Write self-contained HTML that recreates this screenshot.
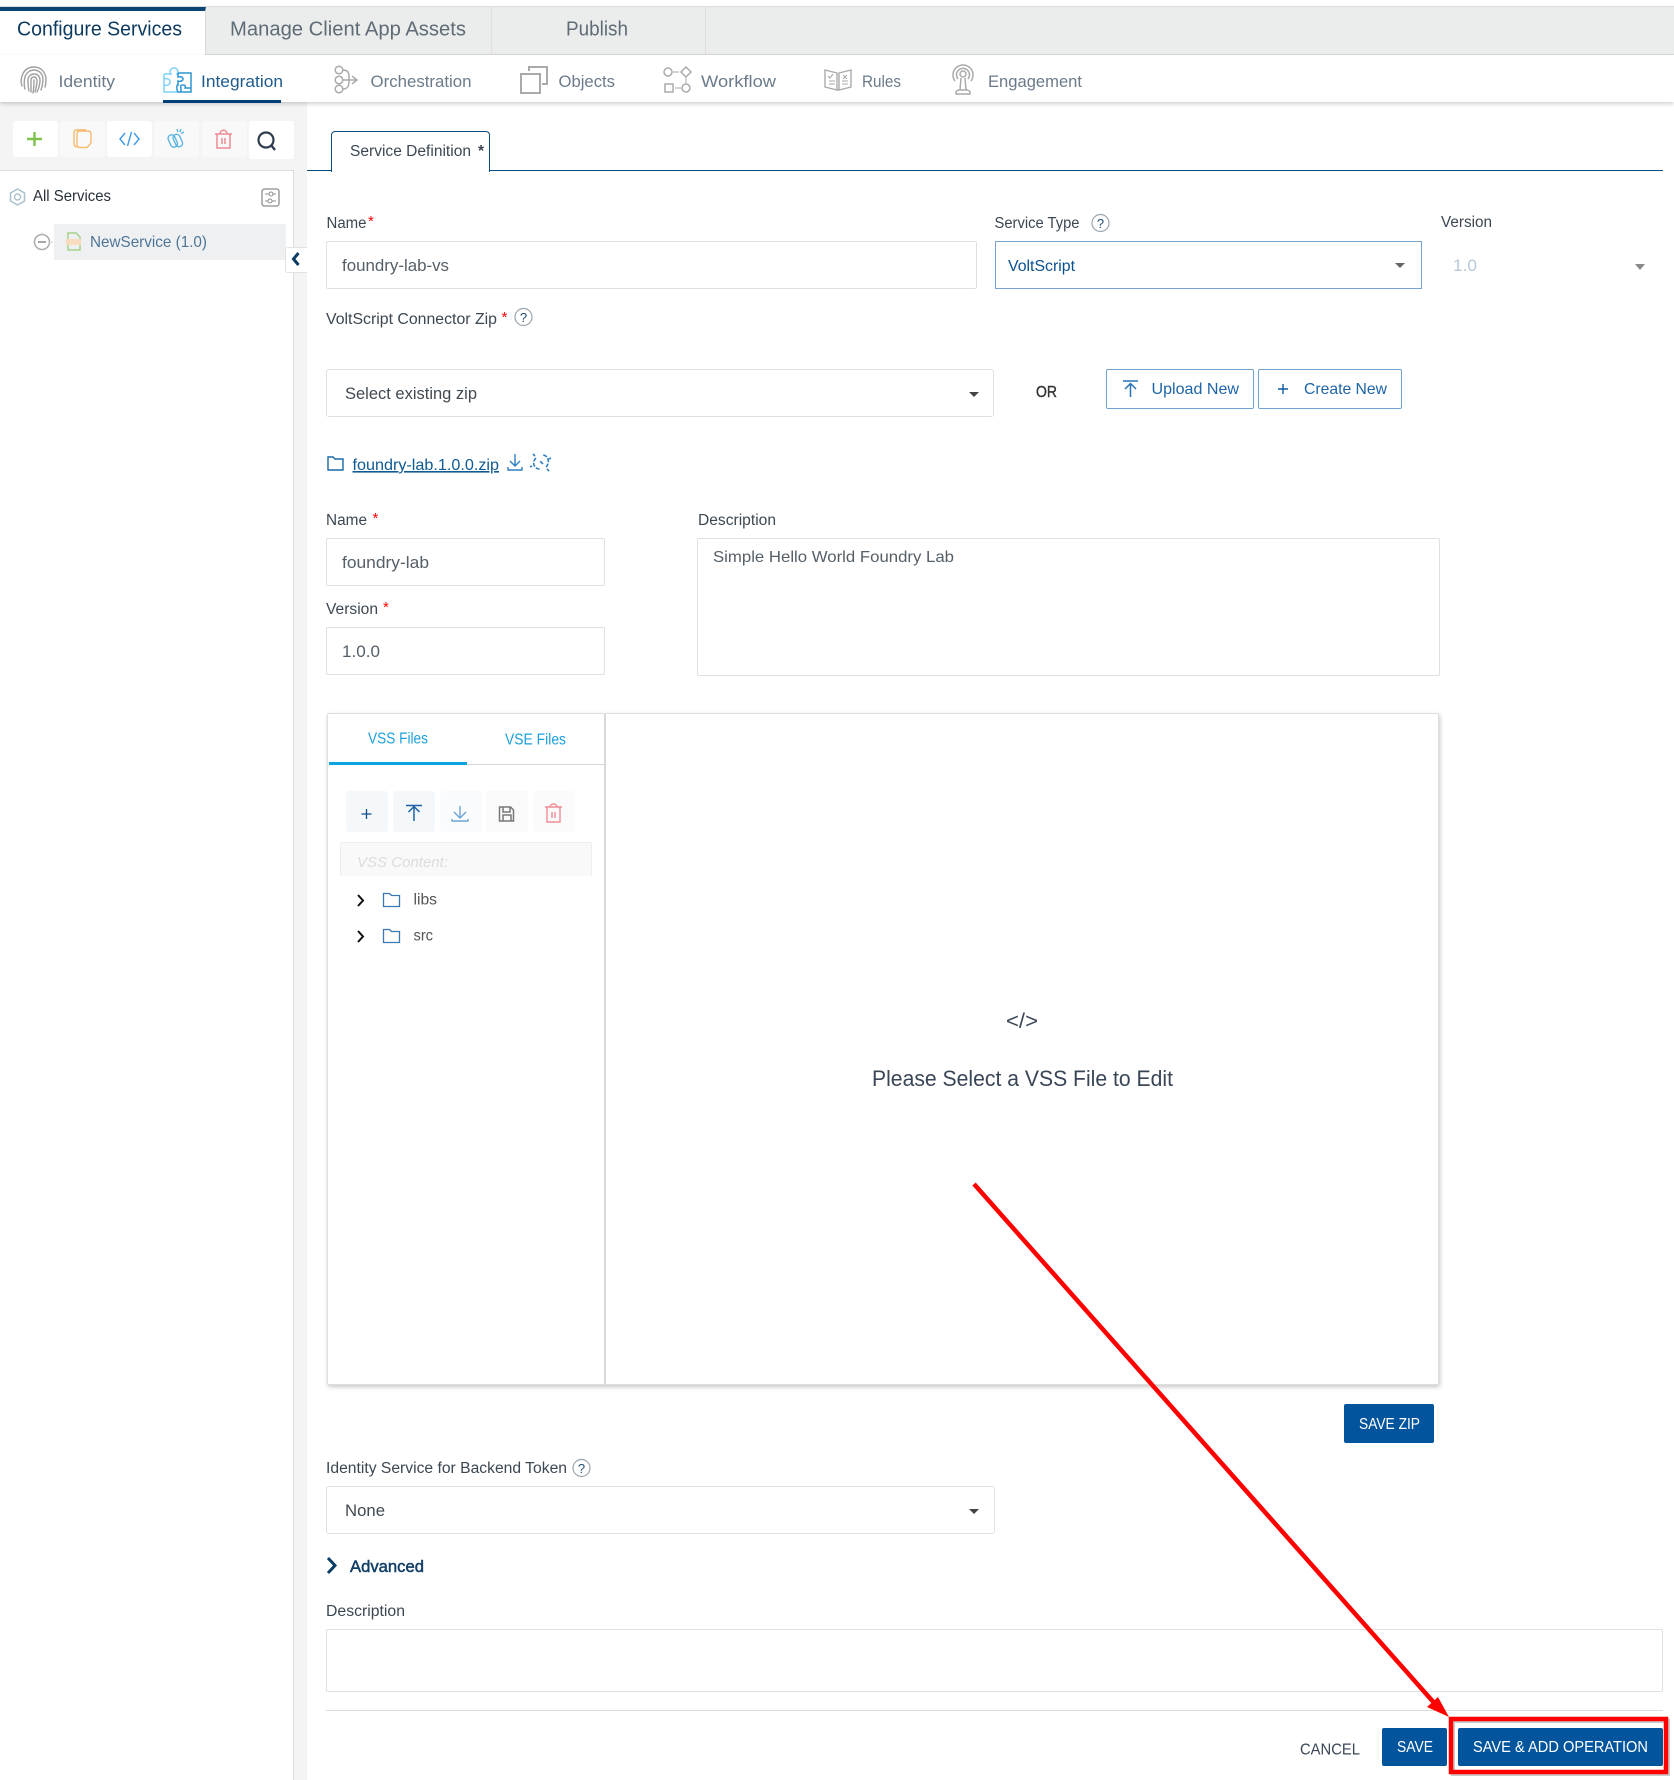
<!DOCTYPE html>
<html lang="en"><head><meta charset="utf-8"><title>Configure Services</title>
<style>
html,body{margin:0;padding:0;background:#fff}
#p{position:relative;width:1674px;height:1780px;overflow:hidden;background:#fff;font-family:"Liberation Sans",sans-serif}
.b{position:absolute;box-sizing:border-box}
.i{border:1px solid #e0e0e0;border-radius:2px;background:#fff}
.btn{background:#02549c;border-radius:2px}
.o{border:1px solid #72a2d0;border-radius:2px;background:#fff}
svg{position:absolute;left:0;top:0}
text{font-family:"Liberation Sans",sans-serif}
</style></head><body><div id="p">
<div class="b" style="left:0;top:6px;width:1674px;height:49px;background:#ebeded;border-top:1px solid #dcdcdc;border-bottom:1px solid #d8d8d8"></div>
<div class="b" style="left:0;top:7px;width:206px;height:49px;background:#fff;border-right:1px solid #d8d8d8;border-top:4px solid #0a4576"></div>
<div class="b" style="left:491px;top:7px;width:1px;height:47px;background:#dfdfdf"></div>
<div class="b" style="left:705px;top:7px;width:1px;height:47px;background:#dfdfdf"></div>
<div class="b" style="left:307px;top:102px;width:1367px;height:1678px;background:#fff"></div>
<div class="b" style="left:0;top:102px;width:307px;height:1678px;background:#f4f4f4"></div>
<div class="b" style="left:0;top:55px;width:1674px;height:47px;background:#fff;box-shadow:0 2px 4px rgba(0,0,0,.18)"></div>
<div class="b" style="left:163px;top:100px;width:118px;height:3px;background:#003e78"></div>
<div class="b" style="left:0;top:170px;width:294px;height:1610px;background:#fff;border-top:1px solid #dcdcdc;border-right:1px solid #dcdcdc"></div>
<div class="b" style="left:13px;top:121px;width:45px;height:36px;background:#fff;border-radius:3px"></div>
<div class="b" style="left:60px;top:121px;width:45px;height:36px;background:#f9f9f9;border-radius:3px"></div>
<div class="b" style="left:107px;top:121px;width:45px;height:36px;background:#fff;border-radius:3px"></div>
<div class="b" style="left:154px;top:121px;width:45px;height:36px;background:#f9f9f9;border-radius:3px"></div>
<div class="b" style="left:202px;top:121px;width:45px;height:36px;background:#f9f9f9;border-radius:3px"></div>
<div class="b" style="left:249px;top:121px;width:45px;height:38px;background:#fff;border-radius:3px"></div>
<div class="b" style="left:54px;top:224px;width:232px;height:36px;background:#eff0f2"></div>
<div class="b" style="left:285px;top:247px;width:22px;height:26px;background:#fff;border:1px solid #e2e2e2;border-right:0;border-radius:3px 0 0 3px"></div>
<div class="b" style="left:307px;top:170px;width:1356px;height:1px;background:#0a4c80"></div>
<div class="b" style="left:331px;top:131px;width:159px;height:41px;background:#fff;border:1.5px solid #0a4c80;border-bottom:0;border-radius:4px 4px 0 0"></div>
<div class="b i" style="left:326px;top:241px;width:651px;height:48px"></div>
<div class="b" style="left:995px;top:241px;width:427px;height:48px;border:1px solid #76a4cf;background:#fff"></div>
<div class="b i" style="left:326px;top:369px;width:668px;height:48px;border-radius:3px"></div>
<div class="b o" style="left:1106px;top:369px;width:148px;height:40px"></div>
<div class="b o" style="left:1258px;top:369px;width:144px;height:40px"></div>
<div class="b i" style="left:326px;top:538px;width:279px;height:48px"></div>
<div class="b i" style="left:326px;top:627px;width:279px;height:48px"></div>
<div class="b i" style="left:697px;top:538px;width:743px;height:138px"></div>
<div class="b" style="left:327px;top:713px;width:1112px;height:672px;background:#fff;border:1px solid #dedede;border-radius:2px;box-shadow:1px 2px 5px rgba(0,0,0,.22)"></div>
<div class="b" style="left:604px;top:714px;width:2px;height:670px;background:#d8d8d8"></div>
<div class="b" style="left:329px;top:764px;width:275px;height:1px;background:#d8d8d8"></div>
<div class="b" style="left:329px;top:762px;width:138px;height:3px;background:#0aa5e0"></div>
<div class="b" style="left:346px;top:791px;width:42px;height:41px;background:#f5f8fb;border-radius:3px"></div>
<div class="b" style="left:393px;top:791px;width:42px;height:41px;background:#f5f8fb;border-radius:3px"></div>
<div class="b" style="left:440px;top:791px;width:42px;height:41px;background:#fafbfd;border-radius:3px"></div>
<div class="b" style="left:486px;top:791px;width:42px;height:41px;background:#fafafb;border-radius:3px"></div>
<div class="b" style="left:533px;top:791px;width:42px;height:41px;background:#fbfbfb;border-radius:3px"></div>
<div class="b" style="left:340px;top:842px;width:252px;height:34px;background:#f9f9f9;border:1px solid #eee;border-bottom:0;border-radius:2px 2px 0 0"></div>
<div class="b btn" style="left:1344px;top:1404px;width:90px;height:39px"></div>
<div class="b i" style="left:326px;top:1486px;width:669px;height:48px;border-radius:3px"></div>
<div class="b i" style="left:326px;top:1629px;width:1337px;height:63px"></div>
<div class="b" style="left:326px;top:1710px;width:1337px;height:1px;background:#dcdcdc"></div>
<div class="b btn" style="left:1382px;top:1728px;width:65px;height:38px"></div>
<div class="b btn" style="left:1458px;top:1728px;width:205px;height:38px"></div>

<svg width="1674" height="1780" viewBox="0 0 1674 1780" xmlns="http://www.w3.org/2000/svg">
<g font-size="20">
<text x="17" y="35.500" textLength="165" lengthAdjust="spacingAndGlyphs" fill="#0d3a5f">Configure Services</text>
<text x="230" y="35.500" textLength="236" lengthAdjust="spacingAndGlyphs" fill="#5f6b75">Manage Client App Assets</text>
<text x="566" y="35.500" textLength="62" lengthAdjust="spacingAndGlyphs" fill="#5f6b75">Publish</text>
</g>
<g font-size="17" fill="#6c7b8a">
<text x="58.500" y="87" textLength="56.500" lengthAdjust="spacingAndGlyphs">Identity</text>
<text x="201" y="87" textLength="82" lengthAdjust="spacingAndGlyphs" fill="#1f5b8c">Integration</text>
<text x="370.500" y="87" textLength="101" lengthAdjust="spacingAndGlyphs">Orchestration</text>
<text x="558.500" y="87" textLength="56.500" lengthAdjust="spacingAndGlyphs">Objects</text>
<text x="701" y="87" textLength="75" lengthAdjust="spacingAndGlyphs">Workflow</text>
<text x="862" y="87" textLength="39" lengthAdjust="spacingAndGlyphs">Rules</text>
<text x="988" y="87" textLength="94" lengthAdjust="spacingAndGlyphs">Engagement</text>
</g>
<!-- subnav icons -->
<g fill="none" stroke="#a0a0a0" stroke-width="1.400" stroke-linecap="round">
<path d="M22 86c-1-3-1-7 0-10 2-6 6-9 12-9 6 0 11 4 12 11 0 3 0 6-1 9"/>
<path d="M25 89c-1-3-1-9 0-12 1-4 5-7 9-7 5 0 9 4 9 9 0 4-1 8-2 11"/>
<path d="M29 91c-1-4-1-8-1-11 0-4 3-6 6-6 4 0 6 3 6 6 0 4-1 8-3 12"/>
<path d="M31 92c0-4 0-9 0-12 0-2 1-3 3-3 2 0 3 2 3 4 0 4-1 7-2 11"/>
<path d="M34 80c0 4 0 8-1 13"/>
</g>
<path d="M164 74h7c-2-3 0-6 3-6 3 0 5 3 3 6h1M164 74v18h14M164 79c3-1 6 0 6 3s-3 4-6 3" fill="none" stroke="#7fd2f6" stroke-width="1.500"/>
<path d="M178 73h13v19h-13M178 73v4c2-1 5 0 5 2s-3 3-5 2v4c-2-1-1 7 0 7M191 88h-6c1-2 0-3-2-3s-3 1-2 3v4" fill="none" stroke="#2f95d2" stroke-width="1.500"/>
<g fill="none" stroke="#aaa" stroke-width="1.500">
<circle cx="339" cy="70" r="3.800"/><circle cx="339" cy="80" r="3.800"/><circle cx="339" cy="89" r="3.800"/>
<path d="M343 70c5 0 6 3 6 6v6c0 4-2 7-6 7M343 80h13M352 76l5 4-5 4"/>
</g>
<g fill="none" stroke="#aaa" stroke-width="2">
<path d="M529 71v-4h18v17h-5"/><rect x="521" y="74" width="19" height="19"/>
</g>
<g fill="none" stroke="#aaa" stroke-width="1.500">
<circle cx="668" cy="72" r="4"/><path d="M686 67l5 5-5 5-5-5z"/><circle cx="686" cy="88" r="4"/><rect x="665" y="84" width="8" height="8"/>
<path d="M673 72h6M686 77v6M681 88h-6" stroke-width="1"/>
</g>
<g fill="none" stroke="#aaa" stroke-width="1.400">
<path d="M825 70l12 3v17l-12-3zM851 70l-12 3v17l12-3zM837 90h2"/>
<path d="M828 76l2 2 3-4M829 81h6M829 84h6M843 75l4 4M847 75l-4 4M842 81h6M842 84h6" stroke-width="1.100"/>
</g>
<g fill="none" stroke="#aaa" stroke-width="1.500">
<circle cx="963" cy="74" r="3"/><path d="M958 79a6.500 6.500 0 1 1 10 0M955 81a10 10 0 1 1 16 0"/>
<path d="M961 78l-1 12h6l-1-12M956 94v-2c0-1 2-2 4-2h6c2 0 4 1 4 2v2z"/>
</g>
<!-- sidebar toolbar -->
<path d="M34.500 132v14M27 139h15" stroke="#7dc24b" stroke-width="2.400" fill="none"/>
<path d="M86 129.800h-9c-2 0-3 1-3 3v11c0 2 1 3 3 3M80 131h8c2 0 3 1 3 3v9l-4 4.500h-7c-2 0-3-1-3-3v-10.500c0-2 1-3 3-3z" fill="none" stroke="#f7bb70" stroke-width="1.400"/>
<path d="M125 133l-5 6 5 6M134 133l5 6-5 6M131.500 132l-4 14" fill="none" stroke="#3c9be8" stroke-width="1.400"/>
<g fill="none" stroke="#5bb5e0" stroke-width="1.400">
<rect x="-3.500" y="-6.500" width="7" height="13" rx="3.500" transform="translate(172.800 141) rotate(-25)"/>
<rect x="-3.500" y="-6.500" width="7" height="13" rx="3.500" transform="translate(177.800 140.500) rotate(-25)"/>
<path d="M177 129l1 3M181 129l-1 3M184 132l-3 1.500"/>
</g>
<path d="M215 134h17M220 134c0-5 7-5 7 0M217 134v14h13v-14M222 138v6M225 138v6" fill="none" stroke="#ee8a92" stroke-width="1.500"/>
<circle cx="266" cy="140" r="7.500" fill="none" stroke="#2e3e4e" stroke-width="2.200"/><path d="M271 145l4 5" stroke="#2e3e4e" stroke-width="2.400"/>
<!-- tree -->
<path d="M17.500 189l7 4v8l-7 4-7-4v-8z" fill="none" stroke="#a9c1cd" stroke-width="1.500"/><circle cx="17.500" cy="197" r="3" fill="none" stroke="#a9c1cd" stroke-width="1.400"/>
<text x="33" y="201" font-size="16" textLength="78" lengthAdjust="spacingAndGlyphs" fill="#26303a">All Services</text>
<rect x="262" y="189" width="17" height="17" rx="2.500" fill="none" stroke="#8c8c8c" stroke-width="1.300"/>
<path d="M265 194h4M273 194h3M265 201h3M272 201h4" stroke="#8c8c8c" fill="none"/><circle cx="271" cy="194" r="2" fill="none" stroke="#8c8c8c"/><circle cx="270" cy="201" r="2" fill="none" stroke="#8c8c8c"/>
<circle cx="42" cy="242" r="7.500" fill="none" stroke="#acacac" stroke-width="1.500"/><path d="M38 242h8" stroke="#888" stroke-width="1.500"/>
<path d="M34 242h-1M51 242h2M42 232v1" stroke="#ccc"/>
<path d="M68 239v-6h8l4 4v2M68 245v5h12v-5" fill="none" stroke="#a6d38a" stroke-width="1.500"/><rect x="66" y="239" width="15" height="6" fill="#f8dcc0"/>
<text x="90" y="247" font-size="16" textLength="117" lengthAdjust="spacingAndGlyphs" fill="#4f7596">NewService (1.0)</text>
<path d="M298.500 253l-5 6 5 6" fill="none" stroke="#0b3c66" stroke-width="3"/>
<!-- form -->
<g font-size="15.500" fill="#3c4752">
<text x="350" y="156" textLength="121" lengthAdjust="spacingAndGlyphs">Service Definition</text>
<text x="478" y="156" font-weight="bold">*</text>
<text x="326.500" y="228" textLength="40" lengthAdjust="spacingAndGlyphs">Name</text>
<text x="994.500" y="228" textLength="85" lengthAdjust="spacingAndGlyphs">Service Type</text>
<text x="1441" y="227" textLength="51" lengthAdjust="spacingAndGlyphs">Version</text>
<text x="326" y="324" textLength="171" lengthAdjust="spacingAndGlyphs">VoltScript Connector Zip</text>
<text x="326" y="525" textLength="41" lengthAdjust="spacingAndGlyphs">Name</text>
<text x="326" y="614" textLength="52" lengthAdjust="spacingAndGlyphs">Version</text>
<text x="698" y="525" textLength="78" lengthAdjust="spacingAndGlyphs">Description</text>
<text x="326" y="1473" textLength="241" lengthAdjust="spacingAndGlyphs">Identity Service for Backend Token</text>
<text x="326" y="1616" textLength="79" lengthAdjust="spacingAndGlyphs">Description</text>
</g>
<g font-size="15" fill="#f00">
<text x="368" y="226">*</text><text x="501.500" y="322">*</text><text x="372.500" y="523">*</text><text x="383" y="612">*</text>
</g>
<g font-size="17" fill="#555f68">
<text x="342" y="271" textLength="107" lengthAdjust="spacingAndGlyphs">foundry-lab-vs</text>
<text x="1008" y="271" font-size="16" textLength="67" lengthAdjust="spacingAndGlyphs" fill="#0b5190">VoltScript</text>
<text x="1453" y="271" textLength="24" lengthAdjust="spacingAndGlyphs" fill="#b6c8da">1.0</text>
<text x="345" y="399" textLength="132" lengthAdjust="spacingAndGlyphs" fill="#414a52">Select existing zip</text>
<text x="342" y="568" textLength="87" lengthAdjust="spacingAndGlyphs">foundry-lab</text>
<text x="342" y="657" textLength="38" lengthAdjust="spacingAndGlyphs">1.0.0</text>
<text x="713" y="562" font-size="16" textLength="241" lengthAdjust="spacingAndGlyphs">Simple Hello World Foundry Lab</text>
<text x="345" y="1516" textLength="40" lengthAdjust="spacingAndGlyphs" fill="#414a52">None</text>
</g>
<g fill="#666"><path d="M1395 263h10l-5 5z"/><path d="M1635 264h10l-5 6z" fill="#8a8a8a"/><path d="M969 392h10l-5 5z" fill="#444"/><path d="M969 1509h10l-5 5z" fill="#444"/></g>
<g fill="none" stroke="#9aa6ae" stroke-width="1.200"><circle cx="1100.500" cy="223" r="8.500"/><circle cx="523.500" cy="317" r="8.500"/><circle cx="581.500" cy="1468" r="8.500"/></g>
<g font-size="13" fill="#204d74" text-anchor="middle"><text x="1100.500" y="228">?</text><text x="523.500" y="322">?</text><text x="581.500" y="1473">?</text></g>
<text x="1036" y="397" font-size="16" stroke="#333" stroke-width=".4" textLength="21" lengthAdjust="spacingAndGlyphs" fill="#333">OR</text>
<path d="M1123 381h15M1130.500 397v-13M1125 389l5.500-5.500 5.500 5.500" fill="none" stroke="#2a73b5" stroke-width="1.500"/>
<text x="1151.500" y="394" font-size="16" textLength="87.500" lengthAdjust="spacingAndGlyphs" fill="#1e64a6">Upload New</text>
<path d="M1283 384v10M1278 389h10" stroke="#0f5a9f" stroke-width="1.400"/>
<text x="1304" y="394" font-size="16" textLength="83" lengthAdjust="spacingAndGlyphs" fill="#1e64a6">Create New</text>
<path d="M328 457h5l2 2h8v11h-15z" fill="none" stroke="#1b6aa8" stroke-width="1.400"/>
<text x="352.500" y="470" font-size="16" textLength="146.500" lengthAdjust="spacingAndGlyphs" fill="#0f5a92" text-decoration="underline">foundry-lab.1.0.0.zip</text>
<path d="M515 454v12M510 461l5 5 5-5M508 467v3h14v-3" fill="none" stroke="#2f7fc4" stroke-width="1.400"/>
<path d="M536 458c-3 3-3 6-1 9 2 2 4 2 5 2M546 467c3-3 3-7 1-10-2-2-4-2-5-2M533 454l2 2M549 471l-2-2M543 464l-3-3M549 459l2-1M532 466l-2 1" fill="none" stroke="#2f7fc4" stroke-width="1.600" stroke-dasharray="4 1.500"/>
<!-- editor -->
<g font-size="15.500" fill="#1ca0dc">
<text x="368" y="743.500" textLength="60" lengthAdjust="spacingAndGlyphs">VSS Files</text>
<text x="505" y="744.500" textLength="61" lengthAdjust="spacingAndGlyphs">VSE Files</text>
</g>
<path d="M366.500 809v10M361.500 814h10" stroke="#0f4f8c" stroke-width="1.300"/>
<path d="M406 805.500h16M414 821v-14M408.500 812l5.500-5.500 5.500 5.500" fill="none" stroke="#1d62a2" stroke-width="1.500"/>
<path d="M460 806v12M454 812l6 6 6-6M452 819v2h16v-2" fill="none" stroke="#6ea3d4" stroke-width="1.400"/>
<path d="M499.500 807h11l3 3v11h-14zM503 807v5h7v-5M503 821v-6h8v6" fill="none" stroke="#777" stroke-width="1.500"/>
<path d="M545 807h17M550 807c0-4 7-4 7 0M547 807v15h13v-15M552 812v6M555 812v6" fill="none" stroke="#f08c95" stroke-width="1.400"/>
<text x="357" y="867" font-size="15" font-style="italic" textLength="91" lengthAdjust="spacingAndGlyphs" fill="#dcdcdc">VSS Content:</text>
<path d="M358 895l5 5.500-5 5.500M358 931l5 5.500-5 5.500" fill="none" stroke="#111" stroke-width="2"/>
<path d="M383.500 893.500h6l2 2h8v11h-16zM383.500 929.500h6l2 2h8v11h-16z" fill="none" stroke="#3b78b0" stroke-width="1.300"/>
<g font-size="16" fill="#555"><text x="413.500" y="904.500" textLength="23.500" lengthAdjust="spacingAndGlyphs">libs</text><text x="413.500" y="940.500" textLength="19.500" lengthAdjust="spacingAndGlyphs">src</text></g>
<text x="1006" y="1028" font-size="21" textLength="32" lengthAdjust="spacingAndGlyphs" fill="#3a4656">&lt;/&gt;</text>
<text x="872" y="1086" font-size="22" textLength="301" lengthAdjust="spacingAndGlyphs" fill="#3a4656">Please Select a VSS File to Edit</text>
<g font-size="15.500" fill="#fff">
<text x="1359" y="1429" textLength="61" lengthAdjust="spacingAndGlyphs">SAVE ZIP</text>
<text x="1397" y="1752" textLength="36" lengthAdjust="spacingAndGlyphs">SAVE</text>
<text x="1473" y="1752" textLength="175" lengthAdjust="spacingAndGlyphs">SAVE &amp; ADD OPERATION</text>
</g>
<path d="M328 1558l7 7.500-7 7.500" fill="none" stroke="#0b3c66" stroke-width="3"/>
<text x="350" y="1572" font-size="17" stroke="#123f66" stroke-width=".5" textLength="74" lengthAdjust="spacingAndGlyphs" fill="#123f66">Advanced</text>
<text x="1300" y="1754.500" font-size="16" textLength="60" lengthAdjust="spacingAndGlyphs" fill="#3a4656">CANCEL</text>
<!-- annotation -->
<rect x="1453" y="1721" width="215" height="53" fill="none" stroke="#999" stroke-opacity=".5" stroke-width="4"/>
<rect x="1451" y="1719" width="215" height="53" fill="none" stroke="#f00" stroke-width="4.500"/>
<path d="M976 1186L1435 1704" stroke="#999" stroke-opacity=".4" stroke-width="4"/>
<path d="M974 1184L1436 1705" stroke="#f00" stroke-width="4.500"/>
<path d="M1449 1717L1427 1707 1438 1697z" fill="#f00"/>
</svg>
</div></body></html>
